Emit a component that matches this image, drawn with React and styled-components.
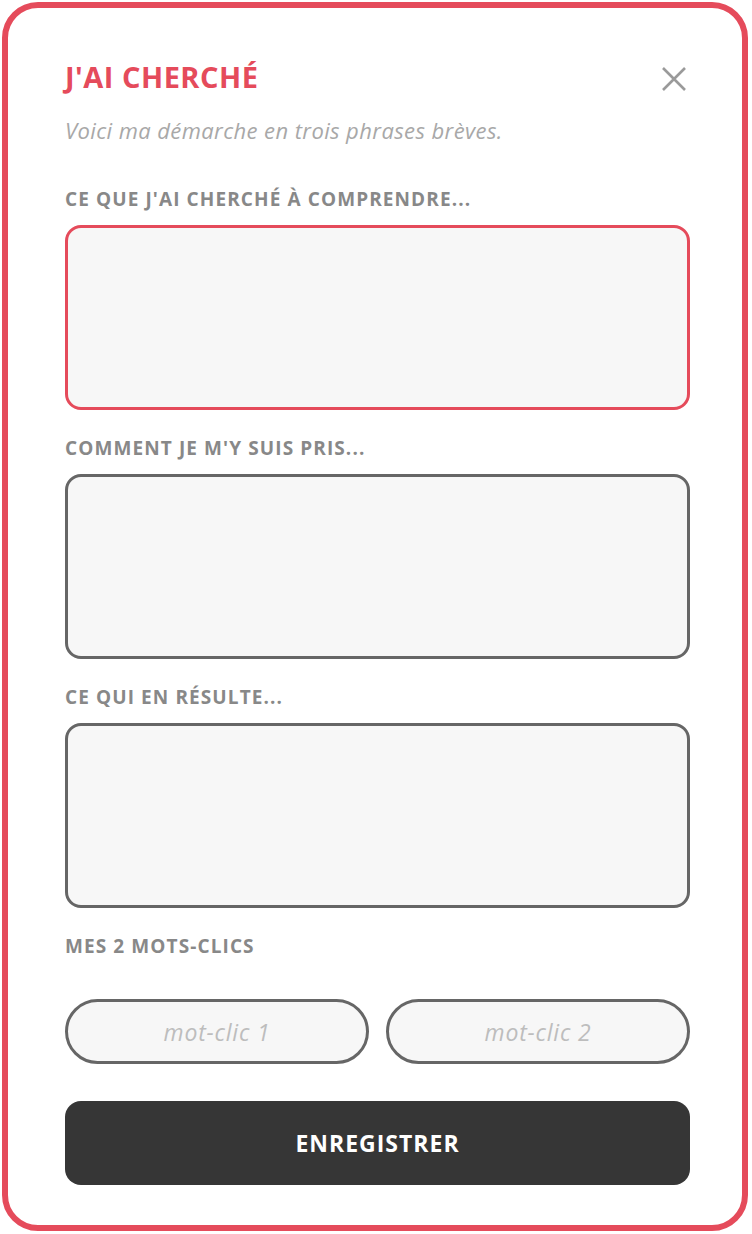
import React from 'react';
import styled, { createGlobalStyle } from 'styled-components';

const GlobalStyle = createGlobalStyle`
  body {
    margin: 0;
    background: #ffffff;
    font-family: "Open Sans", "DejaVu Sans", sans-serif;
  }
  * { box-sizing: border-box; }
`;

const Card = styled.div`
  margin: 2px 4px 3px 2px;
  border: 6px solid #e54b5b;
  border-radius: 36px;
  background: #fff;
  padding: 50px 52px 40px 57px;
  display: flex;
  flex-direction: column;
`;

const Header = styled.div`
  display: flex;
  align-items: flex-start;
  justify-content: space-between;
`;

const Title = styled.h1`
  margin: 0;
  font-size: 29px;
  font-weight: 700;
  color: #e54b5b;
  letter-spacing: 0.5px;
  line-height: 38px;
`;

const Close = styled.button`
  border: none;
  background: none;
  padding: 0;
  margin: 8px 3px 0 0;
  width: 26px;
  height: 26px;
  cursor: pointer;
  color: #9a9a9a;
`;

const Subtitle = styled.p`
  margin: 20px 0 0;
  font-size: 22px;
  font-style: italic;
  color: #a8a8a8;
  letter-spacing: 0.4px;
  line-height: 28px;
`;

const Label = styled.label`
  display: block;
  margin: ${p => p.$first ? '43px' : '26px'} 0 14px;
  font-size: 19px;
  font-weight: 700;
  color: #888888;
  letter-spacing: 1.1px;
  line-height: 24px;
`;

const Area = styled.textarea`
  display: block;
  width: 100%;
  height: 185px;
  resize: none;
  border: 3px solid ${p => p.$active ? '#e54b5b' : '#666666'};
  border-radius: 16px;
  background: #f7f7f7;
  outline: none;
  padding: 12px;
  font-family: inherit;
  font-size: 18px;
`;

const Keywords = styled.div`
  display: grid;
  grid-template-columns: 1fr 1fr;
  gap: 17px;
  margin-top: 27px;
`;

const Keyword = styled.input`
  min-width: 0;
  height: 65px;
  border: 3px solid #666666;
  border-radius: 33px;
  background: #f7f7f7;
  text-align: center;
  font-family: inherit;
  font-size: 23px;
  font-style: italic;
  letter-spacing: 0.8px;
  outline: none;
  color: #333;
  &::placeholder { color: #bdbdbd; }
`;

const Save = styled.button`
  margin-top: 37px;
  height: 84px;
  border: none;
  border-radius: 16px;
  background: #363636;
  color: #ffffff;
  font-family: inherit;
  font-size: 23px;
  font-weight: 700;
  letter-spacing: 1px;
  cursor: pointer;
`;

export default function App() {
  return (
    <>
      <GlobalStyle />
      <Card>
        <Header>
          <Title>J'AI CHERCHÉ</Title>
          <Close aria-label="Fermer">
            <svg width="26" height="26" viewBox="0 0 26 26" fill="none" stroke="currentColor" strokeWidth="2.6" strokeLinecap="butt">
              <path d="M2 2 L24 24 M24 2 L2 24" />
            </svg>
          </Close>
        </Header>
        <Subtitle>Voici ma démarche en trois phrases brèves.</Subtitle>
        <Label $first>CE QUE J'AI CHERCHÉ À COMPRENDRE...</Label>
        <Area $active />
        <Label>COMMENT JE M'Y SUIS PRIS...</Label>
        <Area />
        <Label>CE QUI EN RÉSULTE...</Label>
        <Area />
        <Label>MES 2 MOTS-CLICS</Label>
        <Keywords>
          <Keyword placeholder="mot-clic 1" />
          <Keyword placeholder="mot-clic 2" />
        </Keywords>
        <Save>ENREGISTRER</Save>
      </Card>
    </>
  );
}
